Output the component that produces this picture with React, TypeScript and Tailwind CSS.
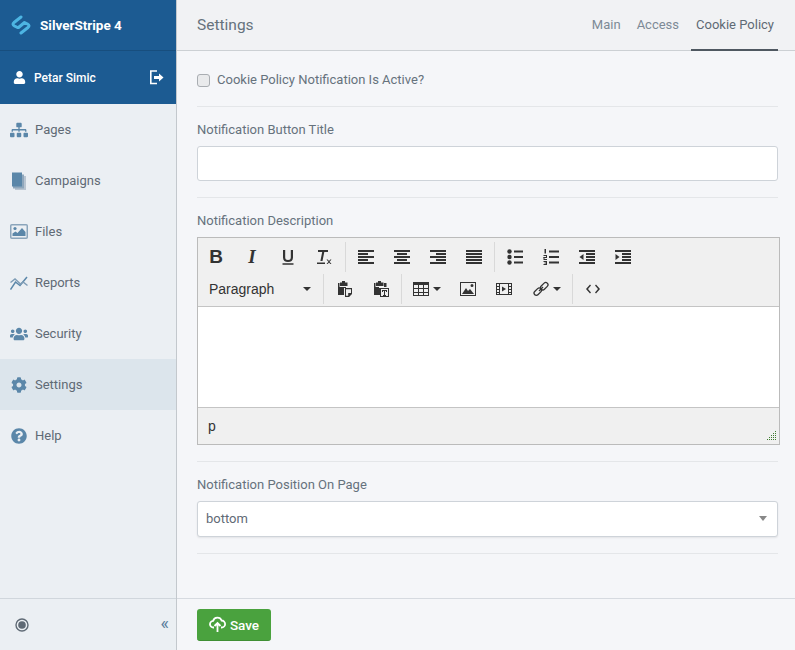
import React from 'react';
import { FaSitemap, FaUsers, FaCog, FaQuestionCircle, FaUser } from 'react-icons/fa';

const Logo = () => (
  <svg width="20" height="20" viewBox="0 0 20 20" fill="none" stroke="#4db5e3" strokeWidth="3" strokeLinecap="round" strokeLinejoin="round">
    <path d="M10 2 L3 7.500 Q0.800 9.500 3.500 11 L6.500 12.500" />
    <path d="M10 18 L17 12.500 Q19.200 10.500 16.500 9 L13.500 7.500 L7.500 12.500" />
  </svg>
);

const SignOutIcon = () => (
  <svg width="15" height="15" viewBox="0 0 15 15" fill="none" stroke="#fff" strokeWidth="1.600">
    <path d="M8 1H1.800v12.500H8" />
    <path d="M5 7.500h6" strokeWidth="3" />
    <path d="M10 3.500l4.500 4-4.500 4z" fill="#fff" stroke="none" />
  </svg>
);

const NavIcon = ({ children }: { children: React.ReactNode }) => (
  <span className="w-[18px] h-[18px] flex items-center justify-center text-[#5b87a9]">{children}</span>
);

const CampaignsIcon = () => (
  <svg width="18" height="18" viewBox="0 0 18 18">
    <rect x="5" y="4" width="11" height="14" fill="#b9c5d1" />
    <rect x="3" y="2.500" width="11" height="14" fill="#8fa7bc" />
    <rect x="2" y="0.500" width="10" height="14" fill="#5b87a9" />
  </svg>
);

const FilesIcon = () => (
  <svg width="18" height="15" viewBox="0 0 18 15">
    <rect x="0.750" y="0.750" width="16.500" height="13.500" rx="1" fill="none" stroke="#8ba5bb" strokeWidth="1.500" />
    <circle cx="5" cy="4.500" r="1.600" fill="#5b87a9" />
    <path d="M2.500 12 V9.500 L5.500 7.500 L7.500 9 L12 4 L15.500 8 V12 Z" fill="#5b87a9" />
  </svg>
);

const ReportsIcon = () => (
  <svg width="18" height="16" viewBox="0 0 18 16" fill="none" stroke="#5b87a9" strokeWidth="1.500">
    <path d="M0.500 14.500 L5.500 7 L10 10.500 L17 2" />
    <path d="M0.500 7.500 L5 4 L10.500 9 L13 7 L17.500 10.500" stroke="#7f9db6" />
  </svg>
);

const items: { label: string; icon: React.ReactNode; active?: boolean }[] = [
  { label: 'Pages', icon: <FaSitemap size={18} /> },
  { label: 'Campaigns', icon: <CampaignsIcon /> },
  { label: 'Files', icon: <FilesIcon /> },
  { label: 'Reports', icon: <ReportsIcon /> },
  { label: 'Security', icon: <FaUsers size={18} /> },
  { label: 'Settings', icon: <FaCog size={16} />, active: true },
  { label: 'Help', icon: <FaQuestionCircle size={16} /> },
];

const Sep = () => <span className="w-px h-[30px] bg-[#d9d9d9] shrink-0" />;

const Btn = ({ w = 'w-9', children }: { w?: string; children: React.ReactNode }) => (
  <span className={`${w} h-8 flex items-center justify-center shrink-0 text-[#333]`}>{children}</span>
);

const Caret = ({ cls = 'ml-[4px]' }: { cls?: string }) => (
  <span className={`${cls} w-0 h-0 border-x-4 border-x-transparent border-t-4 border-t-[#333]`} />
);

const Ic = ({ children, w = 16, h = 16 }: { children: React.ReactNode; w?: number; h?: number }) => (
  <svg width={w} height={h} viewBox={`0 0 ${w} ${h}`} fill="#333">{children}</svg>
);

const Lines = ({ rows }: { rows: [number, number][] }) => (
  <Ic>
    {rows.map(([x, w], i) => (
      <rect key={i} x={x} y={1 + i * 3} width={w} height="2" />
    ))}
  </Ic>
);

const Field = ({ label, children }: { label: string; children: React.ReactNode }) => (
  <div>
    <div className="text-[13px] leading-[20px] pt-[1px] text-[#66727d] mb-[6px]">{label}</div>
    {children}
  </div>
);

const Divider = ({ cls }: { cls: string }) => <div className={`${cls} h-px bg-[#e4e6e9] w-[581px]`} />;

export default function App() {
  return (
    <div className="w-[795px] h-[650px] flex overflow-hidden font-['Roboto',sans-serif] text-[13px]">
      {/* Sidebar */}
      <aside className="w-[177px] shrink-0 flex flex-col bg-[#ebeff3] border-r border-r-[#c3c8cd]">
        <div className="h-[51px] bg-[#1c5b92] border-b border-b-[#174e7e] flex items-center pl-[11px] gap-[9px]">
          <Logo />
          <span className="text-[13.500px] font-bold text-white">SilverStripe 4</span>
        </div>
        <div className="h-[53px] bg-[#1c5b92] flex items-center pl-[13px] pr-[12px] text-white">
          <FaUser size={13} />
          <span className="ml-[8px] text-[12px] font-medium">Petar Simic</span>
          <span className="ml-auto flex"><SignOutIcon /></span>
        </div>
        {items.map(item => (
          <div
            key={item.label}
            className={`h-[51px] flex items-center pl-[10px] gap-[7px] text-[#5f6a75] ${item.active ? 'bg-[#dce5ec]' : ''}`}
          >
            <NavIcon>{item.icon}</NavIcon>
            <span>{item.label}</span>
          </div>
        ))}
        <div className="mt-auto h-[52px] border-t border-t-[#d0d6dc] flex items-center justify-between pl-[15px] pr-[7px]">
          <svg width="14" height="14" viewBox="0 0 14 14">
            <circle cx="7" cy="7" r="6" fill="none" stroke="#5f6a75" strokeWidth="1.400" />
            <circle cx="7" cy="7" r="3.800" fill="#5f6a75" />
          </svg>
          <span className="text-[#5b7f9e] text-[18px] leading-none mb-[3px]">«</span>
        </div>
      </aside>

      {/* Main */}
      <main className="flex-1 flex flex-col bg-[#f5f6f9] min-w-0">
        <header className="h-[51px] shrink-0 bg-[#f1f2f4] border-b border-b-[#ccd0d4] flex items-center justify-between pl-[20px] pr-[17px]">
          <span className="text-[15.500px] text-[#66727d] mt-[1px]">Settings</span>
          <nav className="flex self-stretch -mb-px text-[#7d8a96]">
            <span className="flex items-center mr-[16px] pb-[2px]">Main</span>
            <span className="flex items-center mr-[12px] pb-[2px]">Access</span>
            <span className="flex items-center pl-[5px] pr-[4px] text-[#5f6a75] border-b-2 border-b-[#4f5861]">Cookie Policy</span>
          </nav>
        </header>

        <div className="flex-1 pl-[20px]">
          <label className="h-[55px] pt-[3px] flex items-center gap-[7px] text-[#66727d]">
            <input type="checkbox" className="appearance-none w-[13px] h-[13px] bg-[#e9eaec] border border-[#a9adb2] rounded-[3px]" />
            <span>Cookie Policy Notification Is Active?</span>
          </label>
          <Divider cls="mb-[12px]" />
          <Field label="Notification Button Title">
            <div className="w-[581px] h-[35px] bg-white border border-[#ced3d9] rounded-[3px]" />
          </Field>
          <Divider cls="mt-[16px] mb-[12px]" />
          <Field label="Notification Description">
            <div className="w-[583px] border border-[#bbb] flex flex-col">
              <div className="bg-[#f0f0f0] border-b border-b-[#c4c4c4] h-[69px]">
                <div className="flex items-center h-[38px]">
                  <Btn><span className="font-['Liberation_Sans',sans-serif] font-bold text-[19px] text-[#333]">B</span></Btn>
                  <Btn><span className="font-['Liberation_Serif',serif] italic font-bold text-[19px] text-[#333]">I</span></Btn>
                  <Btn>
                    <Ic><path d="M3 1h2.200v7.500c0 1.700 1 2.500 2.800 2.500s2.800-.8 2.800-2.500V1H13v7.500c0 3-2 4.500-5 4.500s-5-1.500-5-4.500zM2.500 14.300h11v1.400h-11z" /></Ic>
                  </Btn>
                  <Btn>
                    <Ic w={17}><path d="M2 1h10v2H8.300L6.500 12H4.400L6.200 3H2zM1 13.500h8v1.500H1zM10.500 10.500l1.200 0 1.300 1.500 1.300-1.500h1.200l-1.900 2.200 1.900 2.300h-1.200l-1.300-1.500-1.300 1.500h-1.200l1.900-2.300z" /></Ic>
                  </Btn>
                  <span className="w-[3px]" /><Sep /><span className="w-[2px]" />
                  <Btn><Lines rows={[[0, 16], [0, 10], [0, 16], [0, 10], [0, 16]]} /></Btn>
                  <Btn><Lines rows={[[0, 16], [3, 10], [0, 16], [3, 10], [0, 16]]} /></Btn>
                  <Btn><Lines rows={[[0, 16], [6, 10], [0, 16], [6, 10], [0, 16]]} /></Btn>
                  <Btn><Lines rows={[[0, 16], [0, 16], [0, 16], [0, 16], [0, 16]]} /></Btn>
                  <span className="w-[2px]" /><Sep /><span className="w-[2px]" />
                  <Btn>
                    <Ic>
                      <circle cx="2.500" cy="2.500" r="2.200" /><circle cx="2.500" cy="8" r="2.200" /><circle cx="2.500" cy="13.500" r="2.200" />
                      <rect x="7" y="1.500" width="9" height="2" /><rect x="7" y="7" width="9" height="2" /><rect x="7" y="12.500" width="9" height="2" />
                    </Ic>
                  </Btn>
                  <Btn>
                    <Ic>
                      <rect x="1.500" y="0" width="1.500" height="4.500" /><rect x="0.500" y="6" width="3.500" height="1" /><rect x="3" y="6" width="1" height="2.500" /><rect x="0.500" y="8" width="3.500" height="1" /><rect x="0.500" y="8" width="1" height="2" /><rect x="0.500" y="10" width="3.500" height="1" />
                      <rect x="0.500" y="12" width="3.500" height="1" /><rect x="0.500" y="15" width="3.500" height="1" /><rect x="3" y="12" width="1" height="4" /><rect x="1.500" y="13.500" width="2" height="1" />
                      <rect x="6" y="1.500" width="10" height="2" /><rect x="6" y="7" width="10" height="2" /><rect x="6" y="12.500" width="10" height="2" />
                    </Ic>
                  </Btn>
                  <Btn>
                    <Ic>
                      <rect x="0" y="1" width="16" height="2" /><rect x="7" y="4" width="9" height="2" /><rect x="7" y="7" width="9" height="2" /><rect x="7" y="10" width="9" height="2" /><rect x="0" y="13" width="16" height="2" />
                      <path d="M4.500 5v6L0.500 8z" />
                    </Ic>
                  </Btn>
                  <Btn>
                    <Ic>
                      <rect x="0" y="1" width="16" height="2" /><rect x="7" y="4" width="9" height="2" /><rect x="7" y="7" width="9" height="2" /><rect x="7" y="10" width="9" height="2" /><rect x="0" y="13" width="16" height="2" />
                      <path d="M0.500 5v6l4-3z" />
                    </Ic>
                  </Btn>
                </div>
                <div className="flex items-center h-[26px]">
                  <div className="w-[122px] h-8 flex items-center pl-[11px] pr-[9px] justify-between shrink-0">
                    <span className="font-['Liberation_Sans',sans-serif] text-[14px] text-[#333]">Paragraph</span>
                    <Caret cls="" />
                  </div>
                  <span className="w-[3px]" /><Sep /><span className="w-[3px]" />
                  <Btn>
                    <Ic>
                      <path d="M5 0h3v1.500h2.500V5H3V1.500h2zM1 2h1.500v4H9v1H7v7H1z" />
                      <path fillRule="evenodd" d="M8 7h7v6l-3 3H8zM9 8.200v6.600h2.200V12H14V8.200z" />
                    </Ic>
                  </Btn>
                  <Btn>
                    <Ic>
                      <path d="M5 0h3v1.500h2.500V5H3V1.500h2zM1 2h1.500v4H6v1H7v7H1z" />
                      <path d="M11 2h2.500v4H11z" />
                      <path fillRule="evenodd" d="M7 7h9v9H7zM8 8v7h7V8zM9 9h5v2h-1v-1h-1v4h1v1h-3v-1h1v-4h-1v1H9z" />
                    </Ic>
                  </Btn>
                  <span className="w-[2px]" /><Sep /><span className="w-[2px]" />
                  <Btn w="w-[46px]">
                    <span className="flex items-center">
                      <Ic><path fillRule="evenodd" d="M0 1h16v14H0zM1 4v3h4V4zm5 0v3h4V4zm5 0v3h4V4zM1 8v3h4V8zm5 0v3h4V8zm5 0v3h4V8zM1 12v2h4v-2zm5 0v2h4v-2zm5 0v2h4v-2z" /></Ic>
                      <Caret />
                    </span>
                  </Btn>
                  <Btn>
                    <Ic><path fillRule="evenodd" d="M0 1h16v14H0zM1 2v12h14V2z" /><path d="M2 13l4-6 2 3 2-2 4 5zM12 3a1.500 1.500 0 1 1 0 3 1.500 1.500 0 0 1 0-3z" /></Ic>
                  </Btn>
                  <Btn>
                    <Ic><path fillRule="evenodd" d="M0 2h16v12H0zM1 3v2h2V3zm0 3v2h2V6zm0 3v2h2V9zm0 3v1h2v-1zM13 3v2h2V3zm0 3v2h2V6zm0 3v2h2V9zm0 3v1h2v-1zM4 3v10h8V3z" /><path d="M6 5.500l4 2.500-4 2.500z" /></Ic>
                  </Btn>
                  <Btn w="w-[50px]">
                    <span className="flex items-center">
                      <Ic><g fill="none" stroke="#333" strokeWidth="1.300"><rect x="0.500" y="8.500" width="8.500" height="4.500" rx="2.200" transform="rotate(-45 4.700 10.700)" /><rect x="7" y="3" width="8.500" height="4.500" rx="2.200" transform="rotate(-45 11.200 5.200)" /><path d="M6 10l4-4" /></g></Ic>
                      <Caret />
                    </span>
                  </Btn>
                  <Sep /><span className="w-[2px]" />
                  <Btn>
                    <Ic><path d="M5 3.500L1 8l4 4.500 1-1L3 8l3-3.500zM11 3.500L15 8l-4 4.500-1-1L13 8l-3-3.500z" /></Ic>
                  </Btn>
                </div>
              </div>
              <div className="h-[101px] bg-white border-b border-b-[#c4c4c4]" />
              <div className="h-[36px] bg-[#f0f0f0] relative flex items-center pl-[10px] font-['Liberation_Sans',sans-serif] text-[14px] text-[#333]">
                p
                <svg className="absolute right-[2px] bottom-[3px]" width="10" height="10" viewBox="0 0 10 10" fill="#3f7d30">
                  <rect x="8" y="0" width="1" height="1" /><rect x="6" y="2" width="1" height="1" /><rect x="8" y="2" width="1" height="1" />
                  <rect x="4" y="4" width="1" height="1" /><rect x="6" y="4" width="1" height="1" /><rect x="8" y="4" width="1" height="1" />
                  <rect x="2" y="6" width="1" height="1" /><rect x="4" y="6" width="1" height="1" /><rect x="6" y="6" width="1" height="1" /><rect x="8" y="6" width="1" height="1" />
                  <rect x="0" y="8" width="1" height="1" /><rect x="2" y="8" width="1" height="1" /><rect x="4" y="8" width="1" height="1" /><rect x="6" y="8" width="1" height="1" /><rect x="8" y="8" width="1" height="1" />
                </svg>
              </div>
            </div>
          </Field>
          <Divider cls="mt-[16px] mb-[12px]" />
          <Field label="Notification Position On Page">
            <div className="w-[581px] h-[36px] bg-white border border-[#ced3d9] rounded-[3px] shadow-[0_1px_2px_rgba(0,0,0,0.08)] flex items-center justify-between pl-[8px] pr-[10px] text-[13px] text-[#5f6a75]">
              <span>bottom</span>
              <span className="w-0 h-0 border-x-4 border-x-transparent border-t-[5px] border-t-[#888] mb-[2px]" />
            </div>
          </Field>
          <Divider cls="mt-[16px]" />
        </div>

        <footer className="h-[52px] shrink-0 border-t border-t-[#d6dae0] pl-[20px] flex items-center">
          <button className="w-[74px] h-[32px] bg-[#4aa23e] border-b border-b-[#3f8f34] rounded-[3px] flex items-center justify-center gap-[4px] text-white font-medium text-[13.500px]">
            <svg width="17" height="16" viewBox="0 0 17 16" fill="none" stroke="#fff" strokeWidth="1.800">
              <path d="M5 11.500H4.500a3.300 3.300 0 0 1-.4-6.600A4.500 4.500 0 0 1 12.600 4.500a3.500 3.500 0 0 1 0 7H12" />
              <path d="M8.500 16V7.500M5.500 10l3-3 3 3" />
            </svg>
            <span className="mt-[2px]">Save</span>
          </button>
        </footer>
      </main>
    </div>
  );
}
